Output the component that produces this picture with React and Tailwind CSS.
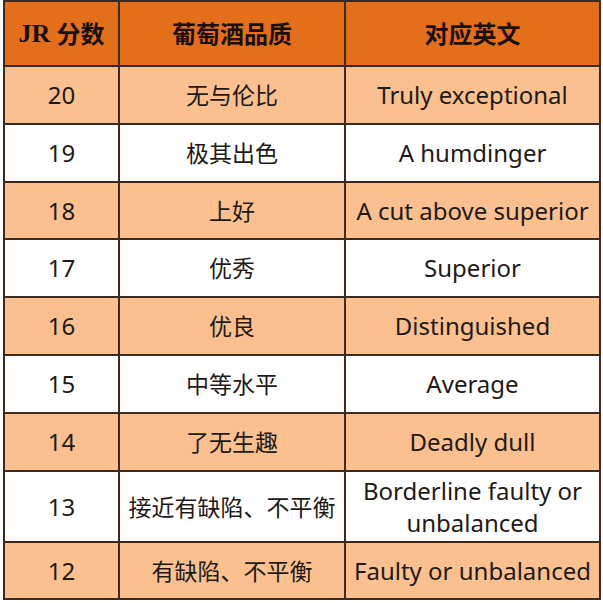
import React from "react";

const rows = [
  { s: "20", cn: "无与伦比", en: ["Truly exceptional"], h: "h-[58px]", bg: "bg-[#fac08f]" },
  { s: "19", cn: "极其出色", en: ["A humdinger"], h: "h-[58px]", bg: "bg-white" },
  { s: "18", cn: "上好", en: ["A cut above superior"], h: "h-[57px]", bg: "bg-[#fac08f]" },
  { s: "17", cn: "优秀", en: ["Superior"], h: "h-[58px]", bg: "bg-white" },
  { s: "16", cn: "优良", en: ["Distinguished"], h: "h-[58px]", bg: "bg-[#fac08f]" },
  { s: "15", cn: "中等水平", en: ["Average"], h: "h-[58px]", bg: "bg-white" },
  { s: "14", cn: "了无生趣", en: ["Deadly dull"], h: "h-[58px]", bg: "bg-[#fac08f]" },
  { s: "13", cn: "接近有缺陷、不平衡", en: ["Borderline faulty or", "unbalanced"], h: "h-[71px]", bg: "bg-white" },
  { s: "12", cn: "有缺陷、不平衡", en: ["Faulty or unbalanced"], h: "h-[55px]", bg: "bg-[#fac08f]", last: true },
];

const cell = "flex items-center justify-center text-center";

export default function App() {
  return (
    <div className="w-[603px] h-[603px] bg-white">
      <div
        className="ml-[3px] w-[598px] border-2 border-[#3b2a1f] text-[#1f1a17]"
        style={{ fontFamily: '"Noto Sans", "Noto Sans CJK SC", sans-serif' }}
      >
        <div className="grid grid-cols-[115px_226px_253px] h-[65px] border-b-2 border-[#3b2a1f] bg-[#e36f1a] text-[24px] font-bold text-[#1a0e08]">
          <div className={`${cell} border-r-2 border-[#3b2a1f]`}>
            <span className="text-[26px] mr-[6px]" style={{ fontFamily: '"Liberation Serif", serif' }}>JR</span>
            <span>分数</span>
          </div>
          <div className={`${cell} border-r-2 border-[#3b2a1f]`}>葡萄酒品质</div>
          <div className={cell}>对应英文</div>
        </div>
        {rows.map((r) => (
          <div
            key={r.s}
            className={`grid grid-cols-[115px_226px_253px] ${r.h} ${r.bg} ${r.last ? "" : "border-b-2"} border-[#3b2a1f] leading-[32px]`}
          >
            <div className={`${cell} border-r-2 border-[#3b2a1f] text-[24px]`}>{r.s}</div>
            <div className={`${cell} border-r-2 border-[#3b2a1f] whitespace-nowrap text-[23px]`}>{r.cn}</div>
            <div className={`${cell} flex-col whitespace-nowrap text-[24px]`}>
              {r.en.map((l) => (
                <span key={l}>{l}</span>
              ))}
            </div>
          </div>
        ))}
      </div>
    </div>
  );
}
